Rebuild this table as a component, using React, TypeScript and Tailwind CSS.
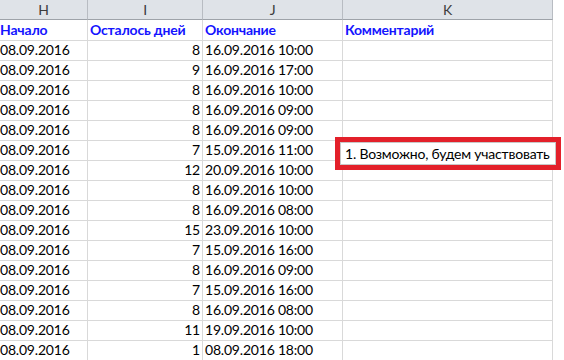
import React from "react";

const rows: [string, string, string][] = [
  ["08.09.2016", "8", "16.09.2016 10:00"],
  ["08.09.2016", "9", "16.09.2016 17:00"],
  ["08.09.2016", "8", "16.09.2016 10:00"],
  ["08.09.2016", "8", "16.09.2016 09:00"],
  ["08.09.2016", "8", "16.09.2016 09:00"],
  ["08.09.2016", "7", "15.09.2016 11:00"],
  ["08.09.2016", "12", "20.09.2016 10:00"],
  ["08.09.2016", "8", "16.09.2016 10:00"],
  ["08.09.2016", "8", "16.09.2016 08:00"],
  ["08.09.2016", "15", "23.09.2016 10:00"],
  ["08.09.2016", "7", "15.09.2016 16:00"],
  ["08.09.2016", "8", "16.09.2016 09:00"],
  ["08.09.2016", "7", "15.09.2016 16:00"],
  ["08.09.2016", "8", "16.09.2016 08:00"],
  ["08.09.2016", "11", "19.09.2016 10:00"],
  ["08.09.2016", "1", "08.09.2016 18:00"],
];

const font = { fontFamily: "Lato, 'Open Sans', sans-serif" };

export default function App() {
  return (
    <div
      className="relative w-[564px] h-[360px] overflow-hidden bg-white text-[14px] text-black tracking-[-0.2px]"
      style={font}
    >
      <div className="grid grid-cols-[88px_115px_140px_210px] w-[553px]">
        {["H", "I", "J", "K"].map((c) => (
          <div
            key={c}
            className="h-[20px] bg-[#dfe3e8] border-r border-b border-r-[#b8bcc2] border-b-[#9ea3a9] flex items-center justify-center text-[#3c3c3c] leading-none"
          >
            {c}
          </div>
        ))}
        {["Начало", "Осталось дней", "Окончание", "Комментарий"].map((t, i) => (
          <div
            key={t}
            className={`h-[21px] border-r border-b border-[#d9d9d9] flex items-end pb-[3px] leading-none font-bold text-[#1414ff] whitespace-nowrap ${
              i === 0 ? "pl-0" : "pl-[2px]"
            }`}
          >
            {t}
          </div>
        ))}
        {rows.map((r, idx) => (
          <React.Fragment key={idx}>
            <div className="h-[20px] border-r border-b border-[#d9d9d9] flex items-end pb-[3px] leading-none whitespace-nowrap">
              {r[0]}
            </div>
            <div className="h-[20px] border-r border-b border-[#d9d9d9] flex items-end justify-end pr-[2px] pb-[3px] leading-none">
              {r[1]}
            </div>
            <div className="h-[20px] border-r border-b border-[#d9d9d9] flex items-end pl-[2px] pb-[3px] leading-none whitespace-nowrap">
              {r[2]}
            </div>
            <div className="h-[20px] border-r border-b border-[#d9d9d9]" />
          </React.Fragment>
        ))}
      </div>

      <div className="absolute left-[335px] top-[137px] w-[226px] h-[33px] border-[5px] border-[#e3202a] bg-white">
        <div className="w-full h-full border border-[#c8c8c8] flex items-center pl-[4px] leading-none whitespace-nowrap">
          1. Возможно, будем участвовать
        </div>
      </div>
    </div>
  );
}
